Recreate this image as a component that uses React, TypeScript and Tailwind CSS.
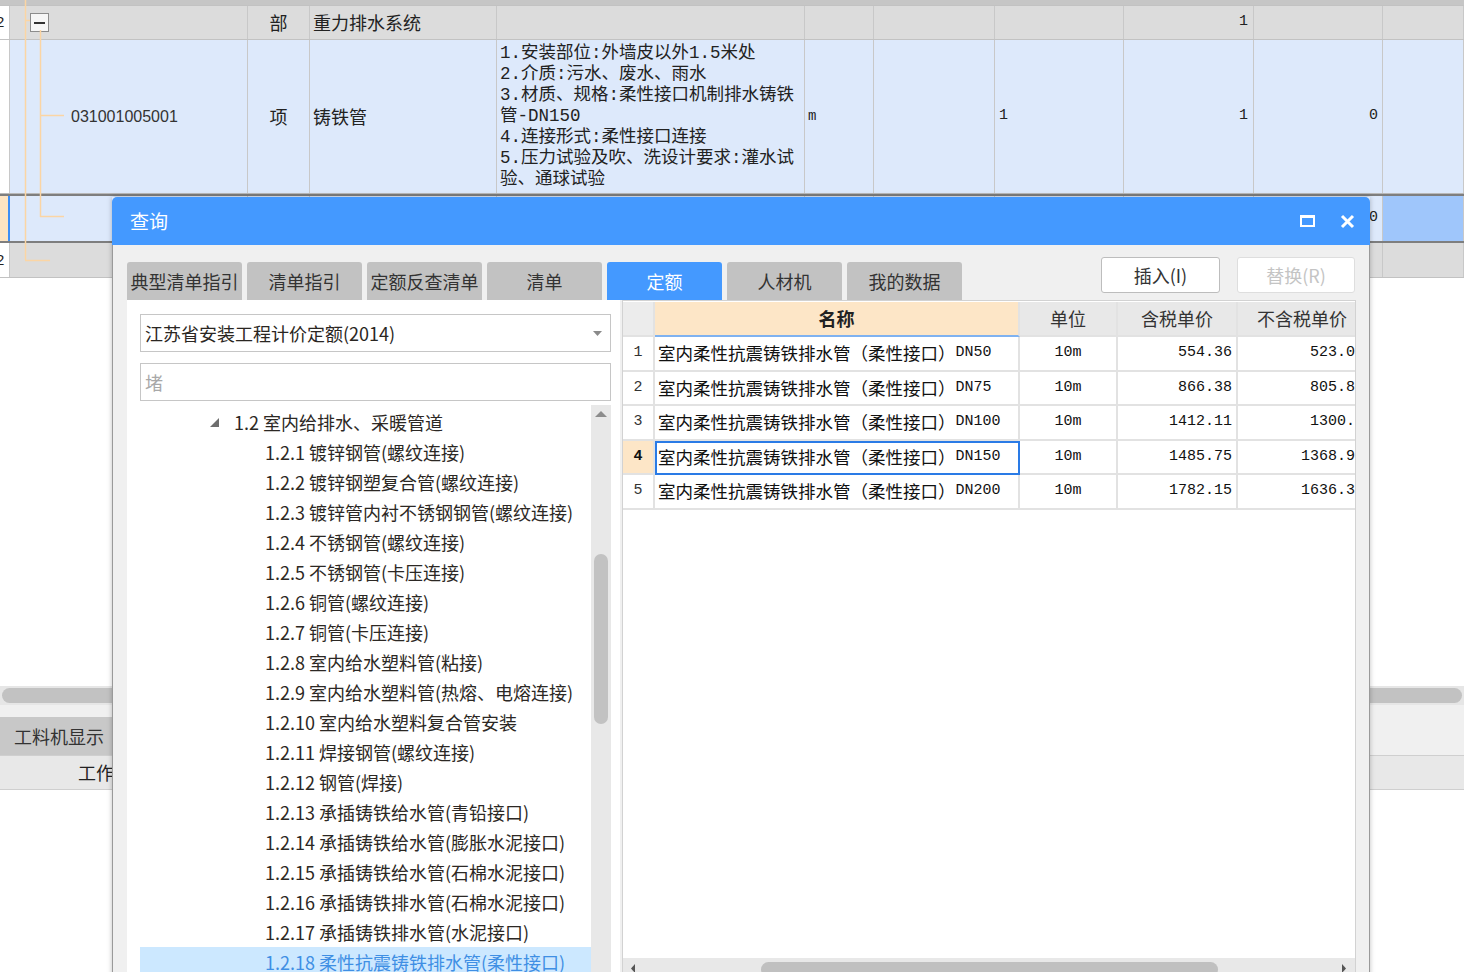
import React from "react";

const COLS = [
  "w-[10px]",
  "w-[238px]",
  "w-[62px]",
  "w-[187px]",
  "w-[308px]",
  "w-[69px]",
  "w-[121px]",
  "w-[129px]",
  "w-[130px]",
  "w-[129px]",
  "w-[81px]",
];

type Cell = { content?: React.ReactNode; cls?: string };

function BgRow({ cls, cells }: { cls: string; cells: Record<number, Cell> }) {
  return (
    <div className={`flex shrink-0 ${cls}`}>
      {COLS.map((w, i) => (
        <div
          key={i}
          className={`${w} shrink-0 h-full border-r border-[#c8c8c8] flex items-center overflow-hidden ${cells[i]?.cls ?? ""}`}
        >
          {cells[i]?.content}
        </div>
      ))}
    </div>
  );
}

const mono = "font-['Liberation_Mono','Noto_Sans_CJK_SC',monospace]";

function CutTwo() {
  return <span className="-ml-[4px] text-[15px] font-['Liberation_Sans',sans-serif] text-[#222]">2</span>;
}

function Background() {
  const desc = [
    "1.安装部位:外墙皮以外1.5米处",
    "2.介质:污水、废水、雨水",
    "3.材质、规格:柔性接口机制排水铸铁",
    "管-DN150",
    "4.连接形式:柔性接口连接",
    "5.压力试验及吹、洗设计要求:灌水试",
    "验、通球试验",
  ];
  return (
    <div className="relative flex flex-col">
      <div className="h-[5px] bg-[#c6c6c6] shrink-0" />
      <BgRow
        cls="h-[35px] bg-[#dcdcdc] border-y border-[#c2c2c2]"
        cells={{
          0: { cls: "bg-white", content: <CutTwo /> },
          1: {
            cls: "pl-[20px]",
            content: (
              <div className="w-[19px] h-[19px] border border-[#8c8c8c] bg-[#f6f6f6] flex items-center justify-center">
                <div className="w-[11px] h-[2px] bg-[#333]" />
              </div>
            ),
          },
          2: { cls: "justify-center text-[18px]", content: "部" },
          3: { cls: "pl-[3px] text-[18px]", content: "重力排水系统" },
          8: { cls: `justify-end pr-[5px] text-[15px] ${mono}`, content: "1" },
        }}
      />
      <BgRow
        cls="h-[154px] bg-[#dde9fb] border-b border-[#b8b8b8]"
        cells={{
          0: { cls: "bg-white" },
          1: {
            cls: "pl-[61px] text-[16px] font-['Liberation_Sans',sans-serif] text-[#333]",
            content: "031001005001",
          },
          2: { cls: "justify-center text-[18px]", content: "项" },
          3: { cls: "pl-[3px] text-[18px]", content: "铸铁管" },
          4: {
            cls: `pl-[3px] flex-col items-start justify-center text-[17.5px] leading-[21px] ${mono}`,
            content: desc.map((d, i) => (
              <div key={i} className="whitespace-nowrap">
                {d}
              </div>
            )),
          },
          5: { cls: `pl-[3px] text-[14px] ${mono}`, content: "m" },
          7: { cls: `pl-[4px] text-[15px] ${mono}`, content: "1" },
          8: { cls: `justify-end pr-[5px] text-[15px] ${mono}`, content: "1" },
          9: { cls: `justify-end pr-[4px] text-[15px] ${mono}`, content: "0" },
        }}
      />
      <BgRow
        cls="h-[49px] bg-[#dde9fb] border-y-2 border-[#7e7e7e]"
        cells={{
          0: { cls: "bg-[#fde4c2] border-r-2 border-r-[#3d8ef5]" },
          9: { cls: `justify-end pr-[4px] text-[15px] ${mono}`, content: "0" },
          10: { cls: "bg-[#9fc6fb]" },
        }}
      />
      <BgRow
        cls="h-[35px] bg-[#dcdcdc] border-b border-[#c2c2c2]"
        cells={{
          0: { cls: "bg-white", content: <CutTwo /> },
        }}
      />
      <div className="h-[408px] shrink-0 bg-white" />
      <div className="h-[19px] shrink-0 bg-[#e6e6e6] pt-[2px] px-[2px]">
        <div className="h-[15px] rounded-full bg-[#c2c2c2]" />
      </div>
      <div className="h-[12px] shrink-0 bg-[#f0f0f0]" />
      <div className="h-[38px] shrink-0 flex bg-[#f0f0f0]">
        <div className="w-[112px] bg-[#c8c8c8] flex items-center pl-[14px] text-[18px] text-[#333]">工料机显示</div>
      </div>
      <div className="h-[35px] shrink-0 bg-[#e8e8e8] border-y border-[#cfcfcf] flex items-center pl-[78px] text-[18px] text-[#222]">
        工作
      </div>
      <svg className="absolute left-0 top-0 pointer-events-none" width="80" height="280">
        <g stroke="#fbd5a4" strokeWidth="1.5" fill="none">
          <line x1="25.5" y1="0" x2="25.5" y2="260" />
          <line x1="25" y1="260.5" x2="50" y2="260.5" />
          <line x1="25" y1="20.5" x2="30" y2="20.5" />
          <line x1="40.5" y1="30" x2="40.5" y2="217" />
          <line x1="40" y1="115.5" x2="64" y2="115.5" />
          <line x1="40" y1="216.5" x2="64" y2="216.5" />
        </g>
      </svg>
    </div>
  );
}

const TABS = ["典型清单指引", "清单指引", "定额反查清单", "清单", "定额", "人材机", "我的数据"];

const TREE = [
  "1.2.1 镀锌钢管(螺纹连接)",
  "1.2.2 镀锌钢塑复合管(螺纹连接)",
  "1.2.3 镀锌管内衬不锈钢钢管(螺纹连接)",
  "1.2.4 不锈钢管(螺纹连接)",
  "1.2.5 不锈钢管(卡压连接)",
  "1.2.6 铜管(螺纹连接)",
  "1.2.7 铜管(卡压连接)",
  "1.2.8 室内给水塑料管(粘接)",
  "1.2.9 室内给水塑料管(热熔、电熔连接)",
  "1.2.10 室内给水塑料复合管安装",
  "1.2.11 焊接钢管(螺纹连接)",
  "1.2.12 钢管(焊接)",
  "1.2.13 承插铸铁给水管(青铅接口)",
  "1.2.14 承插铸铁给水管(膨胀水泥接口)",
  "1.2.15 承插铸铁给水管(石棉水泥接口)",
  "1.2.16 承插铸铁排水管(石棉水泥接口)",
  "1.2.17 承插铸铁排水管(水泥接口)",
];

const ROWS = [
  { n: "1", dn: "DN50", tax: "554.36", notax: "523.04" },
  { n: "2", dn: "DN75", tax: "866.38", notax: "805.82" },
  { n: "3", dn: "DN100", tax: "1412.11", notax: "1300.4" },
  { n: "4", dn: "DN150", tax: "1485.75", notax: "1368.95" },
  { n: "5", dn: "DN200", tax: "1782.15", notax: "1636.33" },
];

function LeftPanel() {
  return (
    <div className="w-[493px] h-[678px] shrink-0 bg-white flex flex-col pt-[14px] pl-[13px] pr-[9px]">
      <div className="h-[38px] shrink-0 border border-[#c6c6c6] bg-white flex items-center pl-[4px] pr-[8px] text-[18px] text-[#2a2622]">
        <span>江苏省安装工程计价定额(2014)</span>
        <svg className="ml-auto" width="9" height="5" viewBox="0 0 9 5">
          <polygon points="0,0 9,0 4.5,5" fill="#8a8a8a" />
        </svg>
      </div>
      <div className="h-[38px] mt-[11px] shrink-0 border border-[#c6c6c6] bg-white flex items-center pl-[4px] text-[18px] text-[#a8a8a8]">
        堵
      </div>
      <div className="mt-[4px] flex-1 flex min-h-0">
        <div className="flex-1 pt-[2px] flex flex-col text-[18px] text-[#2c2824] overflow-hidden">
          <div className="h-[30px] shrink-0 flex items-center pl-[70px]">
            <svg width="9" height="9" viewBox="0 0 9 9">
              <polygon points="9,0 9,9 0,9" fill="#6e6e6e" />
            </svg>
            <span className="ml-[15px] whitespace-nowrap">1.2 室内给排水、采暖管道</span>
          </div>
          {TREE.map((t) => (
            <div key={t} className="h-[30px] shrink-0 flex items-center pl-[125px] whitespace-nowrap">
              {t}
            </div>
          ))}
          <div className="h-[30px] shrink-0 flex items-center pl-[125px] whitespace-nowrap bg-[#cce8ff] text-[#3f8fe4]">
            1.2.18 柔性抗震铸铁排水管(柔性接口)
          </div>
        </div>
        <div className="w-[20px] shrink-0 bg-[#e8e8e8] flex flex-col items-center">
          <svg className="mt-[6px]" width="12" height="6" viewBox="0 0 12 6">
            <polygon points="6,0 12,6 0,6" fill="#8c8c8c" />
          </svg>
          <div className="mt-[137px] w-[14px] h-[170px] rounded-full bg-[#c2c2c2]" />
        </div>
      </div>
    </div>
  );
}

function RightPanel() {
  const cellB = "border-r-2 border-b-2 border-[#e2e2e2] h-full flex items-center shrink-0";
  return (
    <div className="w-[734px] h-[678px] shrink-0 bg-white border border-[#d2d2d2] flex flex-col">
      <div className="mt-[1px] overflow-hidden">
        <div className="flex h-[35px] w-[747px]">
          <div className={`w-[32px] bg-[#ececec] ${cellB}`} />
          <div className={`w-[365px] bg-[#fde6c7] justify-center text-[18px] font-bold text-[#222] border-b-[#7fb2f0] ${cellB}`}>
            名称
          </div>
          <div className={`w-[98px] bg-[#e8e8e8] justify-center text-[18px] text-[#333] ${cellB}`}>单位</div>
          <div className={`w-[120px] bg-[#e8e8e8] justify-center text-[18px] text-[#333] ${cellB}`}>含税单价</div>
          <div className={`w-[132px] bg-[#e8e8e8] justify-center pr-[2px] text-[18px] text-[#333] ${cellB}`}>不含税单价</div>
        </div>
        {ROWS.map((r) => {
          const sel = r.n === "4";
          return (
            <div key={r.n} className="flex h-[34.5px] w-[747px]">
              <div
                className={`w-[32px] justify-center text-[15px] ${mono} ${sel ? "bg-[#fde6c7] font-bold text-[#111]" : "bg-white text-[#333]"} ${cellB}`}
              >
                {r.n}
              </div>
              <div
                className={`w-[365px] pl-[3px] text-[17.5px] text-[#111] whitespace-nowrap ${sel ? "outline-2 outline-[#2a7be6] -outline-offset-2" : ""} ${cellB}`}
              >
                <span>室内柔性抗震铸铁排水管（柔性接口）</span>
                <span className={`text-[15px] ${mono}`}>{r.dn}</span>
              </div>
              <div className={`w-[98px] justify-center text-[15px] text-[#111] ${mono} ${cellB}`}>10m</div>
              <div className={`w-[120px] justify-end pr-[4px] text-[15px] text-[#111] ${mono} ${cellB}`}>{r.tax}</div>
              <div className={`w-[132px] justify-end pr-[4px] text-[15px] text-[#111] ${mono} ${cellB}`}>{r.notax}</div>
            </div>
          );
        })}
      </div>
      <div className="flex-1" />
      <div className="h-[19px] shrink-0 bg-[#e8e8e8] relative flex items-start">
        <svg className="ml-[8px] mt-[6px]" width="4" height="9" viewBox="0 0 4 9">
          <polygon points="4,0 4,9 0,4.5" fill="#555" />
        </svg>
        <div className="ml-[126px] mt-[4px] w-[457px] h-[15px] rounded-full bg-[#c0c0c0]" />
        <svg className="ml-auto mr-[9px] mt-[6px]" width="4" height="9" viewBox="0 0 4 9">
          <polygon points="0,0 0,9 4,4.5" fill="#555" />
        </svg>
      </div>
    </div>
  );
}

function Dialog() {
  return (
    <div className="absolute left-[112px] top-[197px] w-[1258px] h-[795px] flex flex-col shadow-[0_0_5px_rgba(0,0,0,0.25)]">
      <div className="h-[48px] shrink-0 bg-[#4499ff] rounded-t-[5px] flex items-center pl-[18px] pr-[15px]">
        <span className="text-white text-[19px]">查询</span>
        <div className="ml-auto flex items-center gap-[25px]">
          <svg width="15" height="12" viewBox="0 0 15 12">
            <path d="M0 0H15V12H0Z M2 3V10H13V3Z" fill="white" fillRule="evenodd" />
          </svg>
          <svg width="15" height="15" viewBox="0 0 15 15">
            <path d="M2 2L13 13M13 2L2 13" stroke="white" strokeWidth="3" />
          </svg>
        </div>
      </div>
      <div className="flex-1 bg-[#f0f0f0] border-x border-[#9a9a9a] pl-[14px] pr-[13px] flex flex-col">
        <div className="h-[55px] shrink-0 flex items-start">
          <div className="mt-[17px] flex gap-[5px]">
            {TABS.map((t) => (
              <div
                key={t}
                className={`w-[115px] h-[38px] rounded-t-[3px] flex items-center justify-center text-[18px] ${
                  t === "定额" ? "bg-[#4499ff] text-white" : "bg-[#c2c2c2] text-[#333]"
                }`}
              >
                {t}
              </div>
            ))}
          </div>
          <div className="ml-auto mr-[1px] mt-[12px] flex gap-[17px]">
            <div className="w-[119px] h-[36px] bg-white border border-[#bdbdbd] rounded-[3px] flex items-center justify-center text-[18px] text-[#333]">
              插入(I)
            </div>
            <div className="w-[118px] h-[36px] bg-white border border-[#dedede] rounded-[3px] flex items-center justify-center text-[18px] text-[#c4c4c4]">
              替换(R)
            </div>
          </div>
        </div>
        <div className="flex gap-[2px]">
          <LeftPanel />
          <RightPanel />
        </div>
      </div>
    </div>
  );
}

export default function App() {
  return (
    <div className="relative w-[1464px] h-[972px] overflow-hidden bg-white font-['Noto_Sans_CJK_SC',sans-serif] text-[#222]">
      <Background />
      <Dialog />
    </div>
  );
}
